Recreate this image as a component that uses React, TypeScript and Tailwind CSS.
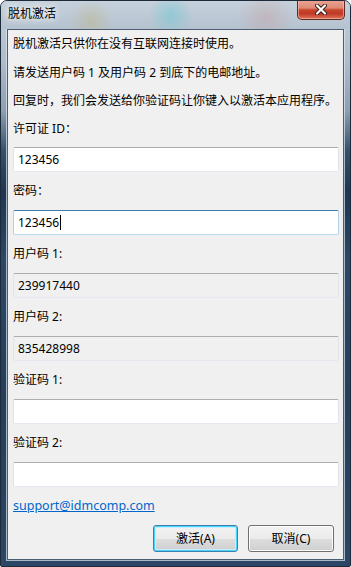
import React from "react";

const font = "font-['Noto_Sans','Noto_Sans_CJK_SC',sans-serif]";

function Label({ children, className = "" }: { children: React.ReactNode; className?: string }) {
  return <div className={`h-[14px] leading-[14px] text-[12px] text-black whitespace-nowrap ${className}`}>{children}</div>;
}

function Field({
  value,
  variant = "normal",
  caret = false,
}: {
  value?: string;
  variant?: "normal" | "focus" | "readonly";
  caret?: boolean;
}) {
  const border =
    variant === "focus"
      ? "border-t-[#3d7bad] border-x-[#b5cfe7] border-b-[#b7d9ed]"
      : "border-t-[#abadb3] border-x-[#e2e3ea] border-b-[#e3e9ef]";
  const bg = variant === "readonly" ? "bg-[#f0f0f0]" : "bg-white";
  return (
    <div className={`mt-[12px] h-[25px] border ${border} ${bg} rounded-[2px] flex items-center pl-[4px] text-[12px] text-black`}>
      {value}
      {caret && <span className="inline-block w-[1px] h-[15px] bg-black ml-[1px]" />}
    </div>
  );
}

export default function App() {
  return (
    <div
      className={`${font} w-[351px] h-[567px] flex flex-col border border-[#1c2a3a] rounded-t-[7px] rounded-b-[2px] overflow-hidden bg-[linear-gradient(180deg,#c4cfda_0px,#aebccb_60px,#8d9fb2_110px,#34506c_150px,#1f3651_190px,#2a4868_260px,#243e5b_400px,#2b4666_567px)]`}
    >
      {/* title bar */}
      <div className="relative h-[28px] flex items-start shrink-0 bg-[radial-gradient(circle_at_90px_20px,rgba(190,180,130,0.45),transparent_22px),radial-gradient(circle_at_170px_14px,rgba(110,200,210,0.55),transparent_22px),radial-gradient(circle_at_265px_16px,rgba(200,150,150,0.35),transparent_28px),linear-gradient(180deg,#c6d1dc,#b5c2cf)]">
        <div className="pl-[7px] pt-[5px] text-[12px] leading-[16px] text-black [text-shadow:0_0_6px_#ffffff,0_0_10px_#ffffff]">
          脱机激活
        </div>
        <div className="ml-auto mr-[5px] w-[48px] h-[20px] mt-[-1px] rounded-b-[5px] border border-[#5b2a23] border-t-0 bg-[linear-gradient(180deg,#eba595_0%,#de8a76_42%,#c9452d_52%,#bf3a25_72%,#e2735c_100%)] shadow-[inset_0_0_0_1px_rgba(255,200,185,0.55)] flex items-center justify-center">
          <svg width="12" height="11" viewBox="0 0 12 11">
            <path d="M2 1.5 L10 9.5 M10 1.5 L2 9.5" stroke="#3a1a16" strokeWidth="4" strokeLinecap="round" />
            <path d="M2 1.5 L10 9.5 M10 1.5 L2 9.5" stroke="#ffffff" strokeWidth="2.2" strokeLinecap="round" />
          </svg>
        </div>
      </div>

      {/* client */}
      <div className="flex-1 px-[6px] pb-[6px] flex flex-col">
        <div className="flex-1 bg-[#f0f0f0] border border-[#4d5d70] shadow-[0_0_0_1px_rgba(225,232,240,0.7)] pl-[5px] pr-[4px] pt-[7px] flex flex-col">
          <Label>脱机激活只供你在没有互联网连接时使用。</Label>
          <Label className="mt-[15px]">请发送用户码 1 及用户码 2 到底下的电邮地址。</Label>
          <Label className="mt-[14px]">回复时，我们会发送给你验证码让你键入以激活本应用程序。</Label>
          <Label className="mt-[14px]">许可证 ID：</Label>
          <div className="mt-[-1px]" />
          <Field value="123456" />
          <Label className="mt-[12px]">密码：</Label>
          <Field value="123456" variant="focus" caret />
          <Label className="mt-[12px]">用户码 1:</Label>
          <Field value="239917440" variant="readonly" />
          <Label className="mt-[12px]">用户码 2:</Label>
          <Field value="835428998" variant="readonly" />
          <Label className="mt-[12px]">验证码 1:</Label>
          <Field />
          <Label className="mt-[12px]">验证码 2:</Label>
          <Field />
          <div className="mt-[12px] h-[14px] leading-[14px] text-[12.5px]">
            <span className="text-[#0066cc] underline">support@idmcomp.com</span>
          </div>
          <div className="mt-[12px] flex justify-end gap-[10px] pr-[5px]">
            <button className="w-[85px] h-[27px] rounded-[3px] border border-[#3c7fb1] shadow-[inset_0_0_0_1px_#48d4fb,inset_0_0_0_2px_#c8eefc] bg-[linear-gradient(180deg,#f2f2f2_0%,#ebebeb_50%,#dddddd_51%,#cfcfcf_100%)] text-[12px] text-black">
              激活(A)
            </button>
            <button className="w-[86px] h-[27px] rounded-[3px] border border-[#707070] shadow-[inset_0_0_0_1px_#fcfcfc] bg-[linear-gradient(180deg,#f2f2f2_0%,#ebebeb_50%,#dddddd_51%,#cfcfcf_100%)] text-[12px] text-black">
              取消(C)
            </button>
          </div>
        </div>
      </div>
    </div>
  );
}
